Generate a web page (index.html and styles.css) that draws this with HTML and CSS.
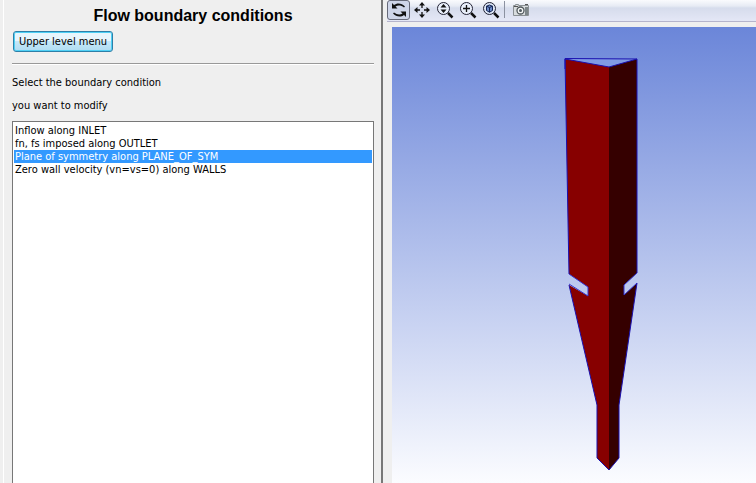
FILE: index.html
```html
<!DOCTYPE html>
<html lang="en">
<head>
<meta charset="utf-8">
<title>Flow boundary conditions</title>
<link rel="stylesheet" href="styles.css">
</head>
<body>
<main class="app">
  <section class="panel">
    <h1 class="title">Flow boundary conditions</h1>
    <button class="menu-button" type="button">Upper level menu</button>
    <hr class="rule">
    <label class="prompt" for="conditions">Select the boundary condition<br>you want to modify</label>
    <select class="conditions" id="conditions" size="4">
      <option>Inflow along INLET</option>
      <option>fn, fs imposed along OUTLET</option>
      <option selected>Plane of symmetry along PLANE_OF_SYM</option>
      <option>Zero wall velocity (vn=vs=0) along WALLS</option>
    </select>
  </section>
  <section class="viewer">
    <div class="toolbar" role="toolbar" aria-label="View tools">
      <button class="tool tool-active" type="button" aria-label="Rotate">
        <svg class="icon" viewBox="0 0 18 18"><path d="M2 2v5.500h5.500L5.500 5.500C8 4 11 4.200 14 6.500l1-1C12 2 7 1.500 4 4zM16 16v-5.500h-5.500l2 2C10 14 7 13.800 4 11.500l-1 1c3 3.500 8 4 11 1.500z" fill="#111"/></svg>
      </button>
      <button class="tool" type="button" aria-label="Pan">
        <svg class="icon" viewBox="0 0 18 18"><path d="M9 3v4M9 11v4M3 9h4M11 9h4" stroke="#111" stroke-width="1.300"/><path d="M9 1l3 3.500H6zM9 17l3-3.500H6zM1 9l3.500-3v6zM17 9l-3.500-3v6z" fill="#111"/></svg>
      </button>
      <button class="tool" type="button" aria-label="Zoom">
        <svg class="icon" viewBox="0 0 18 18"><circle cx="7.500" cy="7.500" r="6" fill="#e9effa" stroke="#223"/><path d="M12 12l4.500 4.500" stroke="#111" stroke-width="2.500"/><path d="M7.500 3l3 3.500h-6zM7.500 12l3-3.500h-6z" fill="#111"/></svg>
      </button>
      <button class="tool" type="button" aria-label="Zoom in">
        <svg class="icon" viewBox="0 0 18 18"><circle cx="7.500" cy="7.500" r="6" fill="#e9effa" stroke="#223"/><path d="M12 12l4.500 4.500" stroke="#111" stroke-width="2.500"/><path d="M7.500 4v7M4 7.500h7" stroke="#111" stroke-width="1.300"/></svg>
      </button>
      <button class="tool" type="button" aria-label="Zoom to fit">
        <svg class="icon" viewBox="0 0 18 18"><circle cx="7.500" cy="7.500" r="6" fill="#dce6f6" stroke="#223"/><path d="M12 12l4.500 4.500" stroke="#111" stroke-width="2.500"/><path d="M4.500 5.200l3-1.200 3 1.200v4.300l-3 1.700-3-1.700z" fill="#6d8bc8" stroke="#142452"/><path d="M4.500 5.200l3 1.300 3-1.300M7.500 6.500v4.700" fill="none" stroke="#142452"/></svg>
      </button>
      <span class="separator"></span>
      <button class="tool" type="button" aria-label="Take a snapshot">
        <svg class="icon" viewBox="0 0 18 18"><path d="M1.500 4.500h2v-1h3v1h10v10h-15z" fill="#d9dddf" stroke="#8a9094"/><path d="M2 5.500h4M13 3.500h3" stroke="#555"/><path d="M13 6h3v8h-3z" fill="#7c8588"/><circle cx="8.500" cy="9.500" r="3.500" fill="#f4f6f6" stroke="#50585c" stroke-width="1.300"/><circle cx="8.500" cy="9.500" r="1.500" fill="#505a60"/></svg>
      </button>
    </div>
    <div class="canvas">
      <svg class="model" viewBox="0 0 364 456" preserveAspectRatio="xMidYMid meet" role="img" aria-label="Flow domain model">
        <path d="M173 32L245 32L217 40z" fill="#809be4"/>
        <path d="M173 32L217 40V443L205 431V378L177 258L196 269V260L177 247z" fill="#870000"/>
        <path d="M217 40L245 32V246L232 258V268L245 256L227 378V431L217 443z" fill="#350000"/>
        <path d="M177 247L196 260V269L177 257M245 246L232 258V268L245 256" fill="none" stroke="#3333d0"/>
        <path d="M173 42V31.500L245 32L217 40L173 32L177 247M245 32V246M177 258L205 378V431L217 443L227 431V378L245 256" fill="none" stroke="#1a10b0"/>
      </svg>
    </div>
  </section>
</main>
</body>
</html>
```
FILE: styles.css
```css
* {
  box-sizing: border-box;
}

body {
  margin: 0;
  background: #efefef;
  color: #000;
  font: 11px/13px "DejaVu Sans Condensed", Tahoma, sans-serif;
}

.app {
  display: grid;
  grid-template-columns: minmax(0, 383fr) minmax(0, 373fr);
  min-height: 100vh;
}

.panel {
  display: flex;
  flex-direction: column;
  align-items: stretch;
  margin-left: 3px;
  padding: 7px 7px 0 8px;
  border-left: 1px solid #fff;
  border-right: 2px solid #777;
}

.title {
  margin: 0;
  font: bold 16px/18px "Liberation Sans", Arial, sans-serif;
  text-align: center;
}

.menu-button {
  align-self: flex-start;
  height: 21px;
  margin: 6px 0 0 1px;
  padding: 0 5px;
  border: 1px solid #2e7fa8;
  border-radius: 3px;
  background: linear-gradient(#e8f5fc 0 50%, #c5e7f8 50%, #b0dcf2);
  box-shadow: inset 0 0 0 1px #4fd0f5;
  color: #000;
  font: inherit;
}

.rule {
  width: 100%;
  margin: 11px 0 0;
  border: 0;
  border-top: 1px solid #999;
  border-bottom: 1px solid #fff;
}

.prompt {
  margin-top: 6px;
  line-height: 23px;
}

.conditions {
  flex: 1;
  width: 100%;
  margin-top: 4px;
  padding: 2px 1px;
  border: 1px solid #777;
  border-bottom: 0;
  border-radius: 0;
  outline: 0;
  background: #fff;
  color: #000;
  font: inherit;
}

.conditions option {
  min-height: 13px;
  padding: 0 1px;
  line-height: 13px;
}

.conditions option:checked {
  background: linear-gradient(#3399ff, #3399ff);
  -webkit-text-fill-color: #fff;
}

.viewer {
  display: flex;
  flex-direction: column;
  padding-left: 4px;
}

.toolbar {
  display: flex;
  align-items: flex-start;
  height: 22px;
  border-bottom: 1px solid #b5b4cc;
  background: linear-gradient(#fafbfd, #e7ebf4 6px, #d6dcec 8px, #e4e7f6);
}

.tool {
  display: flex;
  align-items: center;
  justify-content: center;
  width: 23px;
  height: 20px;
  padding: 0;
  border: 1px solid transparent;
  border-radius: 3px;
  background: none;
}

.tool-active {
  border-color: #666978;
  background: #cfd6e9;
}

.icon {
  display: block;
  width: 18px;
  height: 18px;
}

.separator {
  width: 1px;
  height: 17px;
  margin: 1px 4px 0 2px;
  background: #8b91a0;
}

.canvas {
  display: flex;
  flex: 1;
  margin: 5px 0 0 5px;
  background: linear-gradient(#6b86d9, #fbfcff);
}

.model {
  display: block;
  flex: 1;
  min-width: 0;
}
```
